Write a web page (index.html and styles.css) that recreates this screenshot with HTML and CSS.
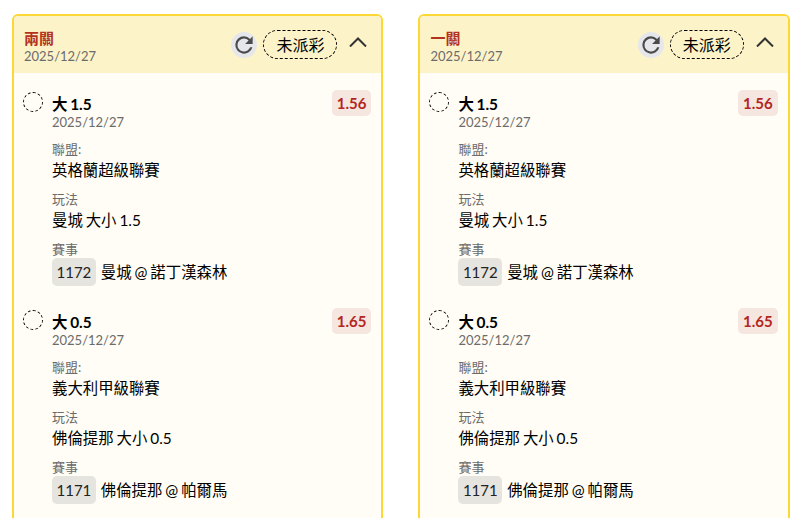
FILE: index.html
```html
<!DOCTYPE html>
<html lang="zh-Hant">
<head>
<meta charset="UTF-8" />
<title>Bets</title>
<link rel="stylesheet" href="styles.css">
</head>
<body>

<div class="board">

  <!-- 兩關 -->
  <section class="card">
    <header class="card-head">
      <div class="head-title">
        <div class="parlay">兩關</div>
        <div class="date">2025/12/27</div>
      </div>
      <button class="refresh" aria-label="refresh">
        <svg width="26" height="26" viewBox="0 0 24 24"><path d="M17.65 6.35A7.96 7.96 0 0 0 12 4a8 8 0 1 0 7.73 10h-2.08A6 6 0 1 1 12 6c1.66 0 3.14.69 4.22 1.78L13 11h7V4z"/></svg>
      </button>
      <span class="status">未派彩</span>
      <svg class="chevron" width="18" height="10" viewBox="0 0 18 10"><path d="M1 9.5 9 1.5l8 8"/></svg>
    </header>
    <div class="card-body">
      <div class="leg">
        <span class="radio"></span>
        <div class="leg-main">
          <div class="leg-top">
            <div class="pick">大 1.5</div>
            <span class="odds">1.56</span>
          </div>
          <div class="date">2025/12/27</div>
          <div class="label">聯盟:</div>
          <div class="value">英格蘭超級聯賽</div>
          <div class="label">玩法</div>
          <div class="value">曼城 大小 1.5</div>
          <div class="label">賽事</div>
          <div class="match"><span class="match-no">1172</span>曼城 @ 諾丁漢森林</div>
        </div>
      </div>
      <div class="leg">
        <span class="radio"></span>
        <div class="leg-main">
          <div class="leg-top">
            <div class="pick">大 0.5</div>
            <span class="odds">1.65</span>
          </div>
          <div class="date">2025/12/27</div>
          <div class="label">聯盟:</div>
          <div class="value">義大利甲級聯賽</div>
          <div class="label">玩法</div>
          <div class="value">佛倫提那 大小 0.5</div>
          <div class="label">賽事</div>
          <div class="match"><span class="match-no">1171</span>佛倫提那 @ 帕爾馬</div>
        </div>
      </div>
    </div>
  </section>

  <!-- 一關 -->
  <section class="card">
    <header class="card-head">
      <div class="head-title">
        <div class="parlay">一關</div>
        <div class="date">2025/12/27</div>
      </div>
      <button class="refresh" aria-label="refresh">
        <svg width="26" height="26" viewBox="0 0 24 24"><path d="M17.65 6.35A7.96 7.96 0 0 0 12 4a8 8 0 1 0 7.73 10h-2.08A6 6 0 1 1 12 6c1.66 0 3.14.69 4.22 1.78L13 11h7V4z"/></svg>
      </button>
      <span class="status">未派彩</span>
      <svg class="chevron" width="18" height="10" viewBox="0 0 18 10"><path d="M1 9.5 9 1.5l8 8"/></svg>
    </header>
    <div class="card-body">
      <div class="leg">
        <span class="radio"></span>
        <div class="leg-main">
          <div class="leg-top">
            <div class="pick">大 1.5</div>
            <span class="odds">1.56</span>
          </div>
          <div class="date">2025/12/27</div>
          <div class="label">聯盟:</div>
          <div class="value">英格蘭超級聯賽</div>
          <div class="label">玩法</div>
          <div class="value">曼城 大小 1.5</div>
          <div class="label">賽事</div>
          <div class="match"><span class="match-no">1172</span>曼城 @ 諾丁漢森林</div>
        </div>
      </div>
      <div class="leg">
        <span class="radio"></span>
        <div class="leg-main">
          <div class="leg-top">
            <div class="pick">大 0.5</div>
            <span class="odds">1.65</span>
          </div>
          <div class="date">2025/12/27</div>
          <div class="label">聯盟:</div>
          <div class="value">義大利甲級聯賽</div>
          <div class="label">玩法</div>
          <div class="value">佛倫提那 大小 0.5</div>
          <div class="label">賽事</div>
          <div class="match"><span class="match-no">1171</span>佛倫提那 @ 帕爾馬</div>
        </div>
      </div>
    </div>
  </section>

</div>

</body>
</html>
```

FILE: styles.css
```css
/* Reset */
* {
  margin: 0; padding: 0; box-sizing: border-box;
}
html, body {
  height: 100%;
  background: #fff;
  overflow: hidden;
  font-family: Lato, "Noto Sans CJK TC", sans-serif;
  color: #000;
}

.board {
  display: flex;
  gap: 35px;
  height: 518px;
  overflow: hidden;
  padding: 14px 0 0 12px;
}

/* Card */
.card {
  flex: 0 0 371.4px;
  height: 600px;
  border: 2px solid #fdd835;
  border-radius: 6px;
  background: #fffdf5;
  overflow: hidden;
}
.card-head {
  display: flex;
  align-items: center;
  height: 57px;
  padding: 0 14px 0 10px;
  background: #fdf3c9;
}
.head-title {
  flex: 1;
  padding-top: 5px;
}
.head-title .date {
  margin-top: 1px;
}
.parlay {
  font-size: 15px;
  line-height: 18px;
  font-weight: 700;
  color: #b3331f;
}
.date {
  font-size: 13px;
  line-height: 17px;
  color: #6b6b6b;
}

.refresh {
  display: flex;
  align-items: center;
  justify-content: center;
  width: 26px;
  height: 26px;
  border: none;
  border-radius: 50%;
  background: #e5e7eb;
  margin-right: 6px;
}
.refresh svg {
  flex: none;
  fill: #4b4b4b;
}
.status {
  display: block;
  width: 74px;
  height: 29px;
  border: 1px dashed #000;
  border-radius: 15px;
  font-size: 16px;
  line-height: 27px;
  text-align: center;
  margin-right: 12px;
}
.chevron {
  margin-top: -6px;
  fill: none;
  stroke: #333;
  stroke-width: 2;
}

/* Legs */
.card-body {
  padding: 19px 10px 0 9px;
}
.leg {
  display: flex;
  gap: 9px;
  margin-bottom: 24px;
}
.radio {
  flex: none;
  width: 20px;
  height: 20px;
  border: 1px dashed #000;
  border-radius: 50%;
}
.leg-main {
  flex: 1;
}
.leg-top {
  display: flex;
  justify-content: space-between;
  align-items: flex-start;
  height: 22px;
}
.pick {
  font-size: 15.4px;
  line-height: 25px;
  font-weight: 700;
  word-spacing: -1px;
}
.odds {
  height: 26px;
  margin-top: -2px;
  padding: 0 5px;
  border-radius: 5px;
  background: #f5e6df;
  color: #b3261e;
  font-size: 15px;
  font-weight: 700;
  line-height: 26px;
}
.label {
  margin-top: 10px;
  font-size: 13px;
  line-height: 16px;
  color: #6b6b6b;
}
.value {
  margin-top: 3px;
  font-size: 15.4px;
  line-height: 21px;
  word-spacing: -1px;
}
.match {
  display: flex;
  align-items: center;
  gap: 5px;
  margin-top: 1px;
  font-size: 15.4px;
  line-height: 28px;
  word-spacing: -1px;
}
.match-no {
  padding: 0 4.5px;
  border-radius: 5px;
  background: #e6e4df;
  color: #222;
  font-size: 15px;
}
```
